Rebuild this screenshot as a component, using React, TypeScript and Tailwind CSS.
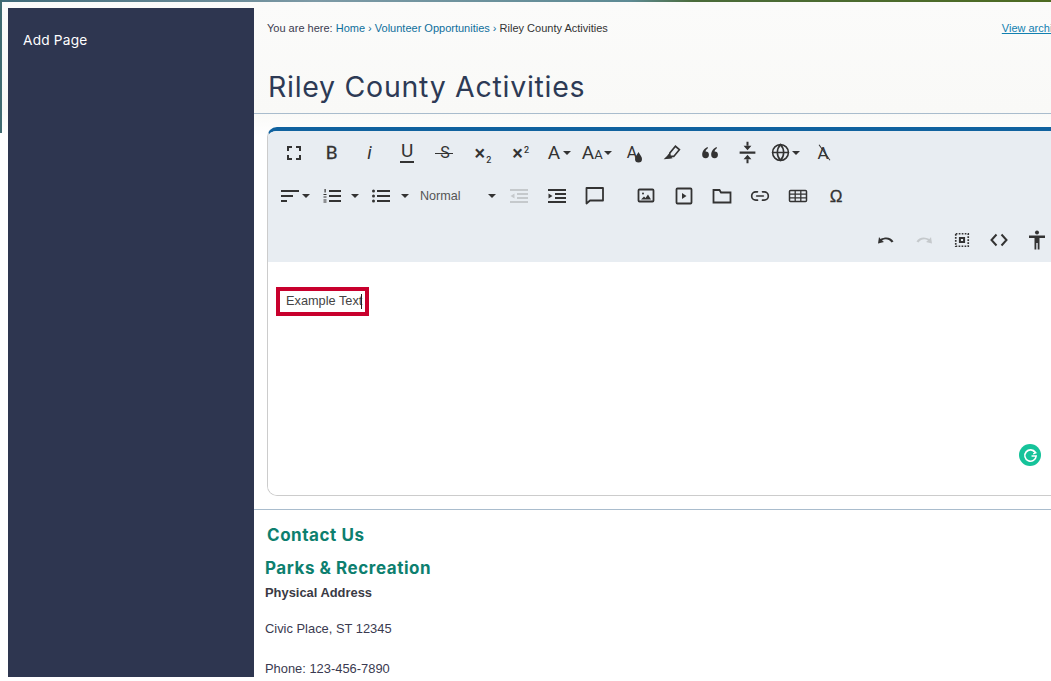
import type { ReactNode } from 'react'
import { Globe, Link2 } from 'lucide-react'

function Slot({ children, className = 'w-[37.8px]' }: { children: ReactNode; className?: string }) {
  return <div className={`flex items-center justify-center shrink-0 h-full text-[#333] ${className}`}>{children}</div>
}

function Caret({ className = '' }: { className?: string }) {
  return <span className={`inline-block w-0 h-0 border-x-[4px] border-x-transparent border-t-[4px] border-t-[#333] shrink-0 ${className}`} />
}

function Ico({ children, w = 24, className = '' }: { children: ReactNode; w?: number; className?: string }) {
  return (
    <svg width={w} height={w} viewBox="0 0 24 24" fill="none" stroke="currentColor" className={`shrink-0 ${className}`}>
      {children}
    </svg>
  )
}

export default function App() {
  return (
    <div className="relative w-[1051px] h-[681px] overflow-hidden bg-white font-['Liberation_Sans',Arial,sans-serif] text-[#333]">
      {/* photo strip behind the page */}
      <div className="h-[2px] bg-[linear-gradient(to_right,#3f6a78_0%,#7d9aa6_30%,#5d8a94_60%,#4a6b3a_66%,#4d6b22_100%)]" />
      <div className="absolute left-0 top-0 w-[2px] h-[133px] bg-[#3f6a70]" />

      <div className="flex pl-[8px] pt-[6px] bg-[linear-gradient(to_bottom,#fbfbfa_0px,#f9f9f7_110px,#ffffff_135px)]">
        <aside className="w-[246px] h-[669px] shrink-0 bg-[#2e3650] pl-[15px] pt-[23px]">
          <a className="block text-white text-[13.7px] leading-[18px] tracking-[0.2px] font-['Inter',sans-serif]">Add Page</a>
        </aside>

        <main className="flex-1 min-w-0">
          {/* breadcrumb */}
          <div className="flex items-center h-[14px] mt-[13px] pl-[13px] text-[11px] leading-[14px] whitespace-nowrap">
            <span className="text-[#3b3b50]">You are here:&nbsp;</span>
            <a className="text-[#0f6f9c]">Home</a>
            <span className="text-[#0f6f9c]">&nbsp;›&nbsp;</span>
            <a className="text-[#0f6f9c]">Volunteer Opportunities</a>
            <span className="text-[#0f6f9c]">&nbsp;›&nbsp;</span>
            <span>Riley County Activities</span>
            <a className="ml-[394px] text-[#1280b0] underline">View archive</a>
          </div>

          <h1 className="mt-[30px] pl-[14px] h-[44px] text-[28.5px] leading-[44px] text-[#2d3a55] tracking-[0.72px] font-['Inter',sans-serif] font-normal whitespace-nowrap">
            Riley County Activities
          </h1>
          <div className="h-px mt-[4px] bg-[#a9bccd]" />

          {/* editor */}
          <div className="relative mt-[13px] ml-[13px] w-[810px] h-[369px] rounded-[10px] border-x border-b border-[#cccccc] border-t-[4px] border-t-[#10629f] overflow-hidden">
            <div className="h-[131px] bg-[#e8edf2] pl-[7px]">
              <div className="flex items-center h-[43.5px]">
                <Slot>
                  <Ico w={24}><path d="M6 10V6h4M14 6h4v4M18 14v4h-4M10 18H6v-4" strokeWidth="2" /></Ico>
                </Slot>
                <Slot><span className="font-['Roboto',sans-serif] text-[19px] [-webkit-text-stroke:0.3px_#333]">B</span></Slot>
                <Slot><span className="font-['Roboto',sans-serif] italic text-[19px]">i</span></Slot>
                <Slot>
                  <span className="flex flex-col items-center font-['Roboto',sans-serif] text-[19px] leading-[16px]">
                    U
                    <span className="block w-[14px] h-[2px] bg-[#333] mt-[2px]" />
                  </span>
                </Slot>
                <Slot>
                  <span className="relative font-['Roboto',sans-serif] text-[16px] leading-[18px]">
                    S
                    <span className="absolute left-[-5px] top-[9px] w-[18px] h-[1.5px] bg-[#333]" />
                  </span>
                </Slot>
                <Slot>
                  <span className="font-['Roboto',sans-serif] font-medium text-[20px] leading-[18px]">×<sub className="text-[9px] align-[-1px] ml-[1px]">2</sub></span>
                </Slot>
                <Slot>
                  <span className="font-['Roboto',sans-serif] font-medium text-[20px] leading-[18px]">×<sup className="text-[9px] align-[2px] ml-[1px]">2</sup></span>
                </Slot>
                <Slot>
                  <span className="font-['Roboto',sans-serif] text-[19px] ml-[2px]">A</span>
                  <Caret className="ml-[3px]" />
                </Slot>
                <Slot>
                  <span className="font-['Roboto',sans-serif] text-[19px] ml-[1px]">A<span className="text-[13px]">A</span></span>
                  <Caret className="ml-[1px]" />
                </Slot>
                <Slot>
                  <span className="relative font-['Roboto',sans-serif] text-[16px] leading-[18px] ml-[-4px]">
                    A
                    <svg width="9" height="11" viewBox="0 0 9 11" className="absolute left-[7px] top-[8px]">
                      <path d="M4.5 0 C6 3 8 4.5 8 7 A3.5 3.5 0 0 1 1 7 C1 4.5 3 3 4.5 0Z" fill="#333" />
                    </svg>
                  </span>
                </Slot>
                <Slot>
                  <Ico w={27}>
                    <path d="M10.5 12.5 15.5 6.5 19 9.5 14 15.5 10.5 15.5Z" strokeWidth="1.5" />
                    <path d="M9.5 13 13 17 10.5 17.5 5 18 8 15Z" fill="currentColor" stroke="none" />
                  </Ico>
                </Slot>
                <Slot>
                  <Ico w={27}>
                    <path d="M10.5 7C7.5 8 5.5 10.5 5.5 14a3 3 0 1 0 3-3c.2-1 .9-2 2-2.7ZM18.5 7c-3 1-5 3.5-5 7a3 3 0 1 0 3-3c.2-1 .9-2 2-2.7Z" fill="currentColor" stroke="none" />
                  </Ico>
                </Slot>
                <Slot>
                  <Ico w={27}>
                    <path d="M5 12h14" strokeWidth="2" />
                    <path d="M12 2.500V6M12 18v3.500" strokeWidth="1.8" />
                    <path d="M8.5 6h7L12 10ZM8.5 18h7L12 14Z" fill="currentColor" stroke="none" />
                  </Ico>
                </Slot>
                <Slot>
                  <Globe size={19} strokeWidth={2} className="ml-[1px]" />
                  <Caret className="ml-[2px]" />
                </Slot>
                <Slot>
                  <span className="relative font-['Roboto',sans-serif] text-[17px] leading-[18px]">
                    A
                    <span className="absolute left-[-3px] top-[8px] w-[19px] h-px bg-[#333] rotate-[55deg]" />
                  </span>
                </Slot>
              </div>

              <div className="flex items-center h-[43.5px]">
                <Slot className="w-[38px] justify-start pl-[6px]">
                  <svg width="18" height="12" viewBox="0 0 18 12" fill="currentColor"><rect width="18" height="2" /><rect y="5" width="12" height="2" /><rect y="10" width="6" height="2" /></svg>
                  <Caret className="ml-[3px]" />
                </Slot>
                <Slot className="w-[48px] justify-start pl-[10px]">
                  <svg width="18" height="14" viewBox="0 0 18 14" fill="currentColor">
                    <rect x="6" y="1" width="12" height="2" /><rect x="6" y="6" width="12" height="2" /><rect x="6" y="11" width="12" height="2" />
                    <rect x="1.5" y="0" width="1.2" height="3.5" /><rect x="0.5" y="5" width="3" height="1" /><rect x="0.5" y="7.5" width="3" height="1" /><rect x="0.5" y="10.5" width="3" height="1" /><rect x="0.5" y="12.5" width="3" height="1" />
                  </svg>
                  <Caret className="ml-[10px]" />
                </Slot>
                <Slot className="w-[48px] justify-start pl-[11px]">
                  <svg width="18" height="14" viewBox="0 0 18 14" fill="currentColor">
                    <circle cx="1.5" cy="2" r="1.5" /><circle cx="1.5" cy="7" r="1.5" /><circle cx="1.5" cy="12" r="1.5" />
                    <rect x="5" y="1" width="13" height="2" /><rect x="5" y="6" width="13" height="2" /><rect x="5" y="11" width="13" height="2" />
                  </svg>
                  <Caret className="ml-[11px]" />
                </Slot>
                <Slot className="w-[91px] justify-start pl-[11px]">
                  <span className="w-[69px] text-[12.6px] text-[#555]">Normal</span>
                  <Caret className="ml-[-1px]" />
                </Slot>
                <Slot className="w-[38px]">
                  <svg width="18" height="14" viewBox="0 0 18 14" fill="#c5c9cc">
                    <rect width="18" height="2" /><rect x="7" y="4" width="11" height="2" /><rect x="7" y="8" width="11" height="2" /><rect y="12" width="18" height="2" /><path d="M4.5 4.5v5L0.5 7Z" />
                  </svg>
                </Slot>
                <Slot className="w-[38px]">
                  <svg width="18" height="14" viewBox="0 0 18 14" fill="#333">
                    <rect width="18" height="2" /><rect x="7" y="4" width="11" height="2" /><rect x="7" y="8" width="11" height="2" /><rect y="12" width="18" height="2" /><path d="M0.5 4.5v5L4.5 7Z" />
                  </svg>
                </Slot>
                <Slot className="w-[38px]">
                  <Ico><path d="M4 4.5h16.5V17H7.5L4 20Z" strokeWidth="1.8" strokeLinejoin="round" transform="translate(-0.5 -0.5)" /></Ico>
                </Slot>
                <div className="w-[13px] shrink-0" />
                <Slot className="w-[38px]">
                  <Ico>
                    <rect x="4.5" y="5.5" width="15" height="12" rx="1" strokeWidth="1.8" />
                    <circle cx="9" cy="9.5" r="1" fill="currentColor" stroke="none" />
                    <path d="M7 15.5l3-3 1.5 1.5 2.5-3.5 3 5Z" fill="currentColor" stroke="none" />
                  </Ico>
                </Slot>
                <Slot className="w-[38px]">
                  <Ico>
                    <rect x="4.5" y="4.5" width="15" height="15" rx="1" strokeWidth="1.8" />
                    <path d="M10 9l4.5 3-4.5 3Z" fill="currentColor" stroke="none" />
                  </Ico>
                </Slot>
                <Slot className="w-[38px]">
                  <Ico><path d="M3.5 6h6l1.5 2.5h9.5v10h-17Z" strokeWidth="1.8" /></Ico>
                </Slot>
                <Slot className="w-[38px]">
                  <Link2 size={20} strokeWidth={2} />
                </Slot>
                <Slot className="w-[38px]">
                  <Ico>
                    <rect x="3.5" y="6.5" width="17" height="11" rx="1" strokeWidth="1.5" />
                    <path d="M3.5 10.2h17M3.5 13.8h17M9.2 6.5v11M14.8 6.5v11" strokeWidth="1.3" />
                  </Ico>
                </Slot>
                <Slot className="w-[38px]"><span className="font-['Liberation_Sans',sans-serif] text-[17px] [-webkit-text-stroke:0.3px_#333]">Ω</span></Slot>
              </div>

              <div className="flex items-center justify-end h-[43.5px] pr-[20px]">
                <Slot>
                  <Ico w={24}>
                    <path d="M5 9l-1 6.5 6-1.5-2-1.5c3-2 7-1.500 9.500 2l2 -1C17 9 11.500 8.500 6.500 11Z" fill="currentColor" stroke="none" />
                  </Ico>
                </Slot>
                <Slot className="w-[37.8px] text-[#c5c9cc]">
                  <Ico w={24} className="-scale-x-100">
                    <path d="M5 9l-1 6.5 6-1.5-2-1.500c3-2 7-1.500 9.500 2l2-1C17 9 11.500 8.500 6.500 11Z" fill="currentColor" stroke="none" />
                  </Ico>
                </Slot>
                <Slot>
                  <Ico w={20}>
                    <path d="M4.500 4.500h15v15h-15Z" strokeWidth="2" strokeDasharray="2 1.600" />
                    <path d="M9.500 9.500h5v5h-5Z" strokeWidth="2.400" />
                  </Ico>
                </Slot>
                <Slot>
                  <Ico><path d="M9.500 6.500 4.500 12l5 5.500M14.500 6.500l5 5.500-5 5.500" strokeWidth="2" /></Ico>
                </Slot>
                <Slot>
                  <Ico>
                    <circle cx="12" cy="4.500" r="2" fill="currentColor" stroke="none" />
                    <path d="M4 7.500h16v2.500h-5.500v11.500H12.700V15h-1.400v6.500H9.500V10H4Z" fill="currentColor" stroke="none" />
                  </Ico>
                </Slot>
              </div>
            </div>

            <div className="relative pl-[8px] pt-[25px] bg-white h-[233px]">
              <div className="flex items-center w-[93px] h-[29px] pl-[6px] pb-[1px] border-[4px] border-[#c8002d] text-[12.75px] text-[#444] whitespace-nowrap">
                Example Text
                <span className="w-px h-[15px] bg-[#222] ml-[-1px]" />
              </div>
              <div className="absolute left-[751px] top-[182px] w-[22px] h-[22px] rounded-full bg-[#15c39a] flex items-center justify-center">
                <svg width="15" height="15" viewBox="0 0 14 14" fill="none" stroke="#fff" strokeWidth="1.500">
                  <path d="M11.500 4.200A5.300 5.300 0 1 0 12.300 7.500H8" />
                  <path d="M9.500 2.500 12 4.500 9.500 5.500" strokeWidth="1.200" />
                </svg>
              </div>
            </div>
          </div>

          <div className="h-px mt-[13px] bg-[#a9bccd]" />

          {/* contact */}
          <div className="text-[12.9px]">
            <h2 className="mt-[14px] pl-[13px] text-[17px] leading-[22px] font-bold text-[#0d7f6f] font-['Inter',sans-serif] tracking-[0.55px]">Contact Us</h2>
            <h3 className="mt-[11px] pl-[11px] text-[17px] leading-[22px] font-bold text-[#0d7f6f] font-['Inter',sans-serif] tracking-[0.55px]">Parks &amp; Recreation</h3>
            <div className="mt-[6px] pl-[11px] leading-[16px] font-bold text-[#3a3a44]">Physical Address</div>
            <div className="mt-[20px] pl-[11px] leading-[16px] text-[#3a3a50]">Civic Place, ST 12345</div>
            <div className="mt-[24px] pl-[11px] leading-[16px] text-[#3a3a50]">Phone: 123-456-7890</div>
          </div>
        </main>
      </div>
    </div>
  )
}
